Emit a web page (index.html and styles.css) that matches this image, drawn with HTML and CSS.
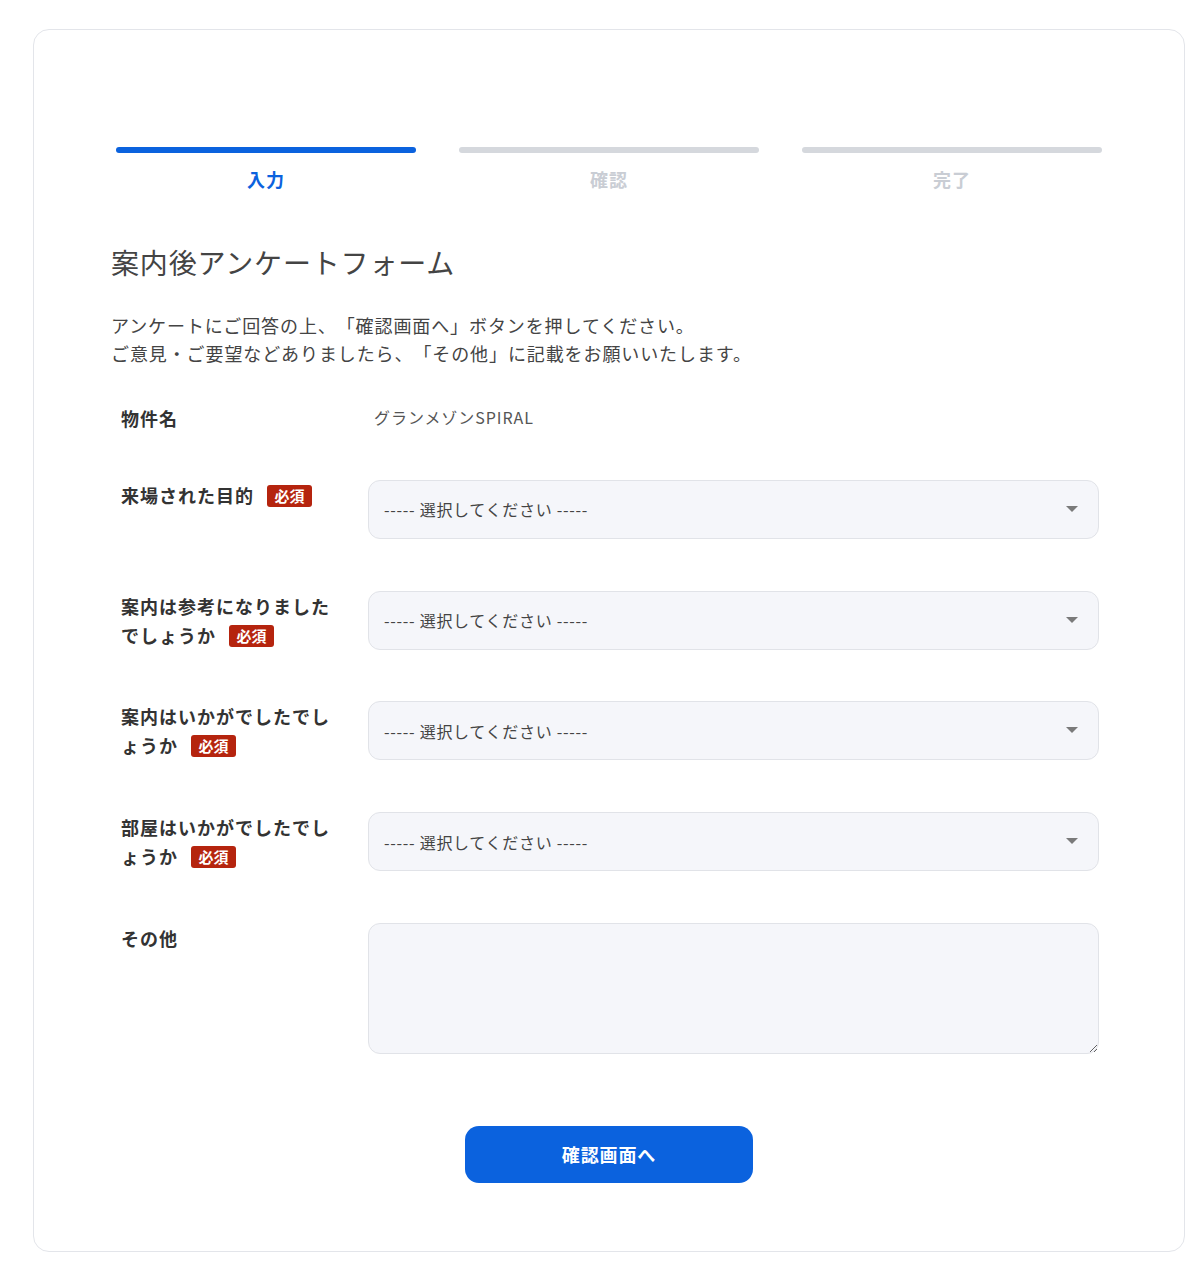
FILE: index.html
```html
<!DOCTYPE html>
<html lang="ja">
<head>
<meta charset="utf-8">
<title>案内後アンケートフォーム</title>
<link rel="stylesheet" href="styles.css">
</head>
<body>
<div class="page">
  <div class="card">
    <div class="steps">
      <div class="step active"><div class="bar"></div><div class="step-label">入力</div></div>
      <div class="step"><div class="bar"></div><div class="step-label">確認</div></div>
      <div class="step"><div class="bar"></div><div class="step-label">完了</div></div>
    </div>
    <div class="form-area">
      <h1 class="title">案内後アンケートフォーム</h1>
      <p class="desc">アンケートにご回答の上、「確認画面へ」ボタンを押してください。<br>ご意見・ご要望などありましたら、「その他」に記載をお願いいたします。</p>
      <div class="rows">
        <div class="row row-static">
          <div class="label">物件名</div>
          <div class="value">グランメゾンSPIRAL</div>
        </div>
        <div class="row">
          <div class="label">来場された目的<span class="req">必須</span></div>
          <div class="select-wrap"><select class="select"><option>----- 選択してください -----</option></select></div>
        </div>
        <div class="row">
          <div class="label">案内は参考になりましたでしょうか<span class="req">必須</span></div>
          <div class="select-wrap"><select class="select"><option>----- 選択してください -----</option></select></div>
        </div>
        <div class="row">
          <div class="label">案内はいかがでしたでしょうか<span class="req">必須</span></div>
          <div class="select-wrap"><select class="select"><option>----- 選択してください -----</option></select></div>
        </div>
        <div class="row">
          <div class="label">部屋はいかがでしたでしょうか<span class="req">必須</span></div>
          <div class="select-wrap"><select class="select"><option>----- 選択してください -----</option></select></div>
        </div>
        <div class="row">
          <div class="label">その他</div>
          <textarea class="textarea"></textarea>
        </div>
      </div>
      <div class="actions">
        <button class="btn" type="button">確認画面へ</button>
      </div>
    </div>
  </div>
</div>
</body>
</html>
```

FILE: styles.css
```css
* { box-sizing: border-box; }
html, body { margin: 0; padding: 0; background: #fff; }
body {
  font-family: "Noto Sans CJK JP", "Noto Sans", sans-serif;
  color: #333;
  text-spacing-trim: space-all;
}
.page {
  padding: 29px 16px 16px 33px;
}
.card {
  border: 1px solid #e3e5ea;
  border-radius: 16px;
  padding: 117px 82px 68px;
  background: #fff;
}
.steps {
  display: flex;
  gap: 43px;
}
.step {
  flex: 1;
  display: flex;
  flex-direction: column;
  align-items: center;
}
.bar {
  width: 100%;
  height: 6px;
  border-radius: 3px;
  background: #d5d8dd;
}
.step.active .bar { background: #0b62de; }
.step-label {
  margin-top: 12px;
  font-size: 18px;
  line-height: 28px;
  font-weight: 700;
  letter-spacing: 0.05em;
  color: #c9cdd4;
}
.step.active .step-label { color: #0b62de; }

.form-area {
  margin: 0 -5px;
}
.title {
  margin: 49px 0 0;
  font-size: 28px;
  line-height: 40px;
  font-weight: 400;
  letter-spacing: 0.03em;
  color: #444;
}
.desc {
  margin: 29px 0 0;
  font-size: 18px;
  line-height: 28px;
  letter-spacing: 0.05em;
  color: #444;
}
.rows {
  margin-top: 37px;
  display: flex;
  flex-direction: column;
  gap: 51.75px;
}
.row {
  display: grid;
  grid-template-columns: 257px 731px;
  align-items: start;
}
.row-static { margin-bottom: -5px; }
.label {
  padding: 1px 0 0 10px;
  width: 232px;
  font-size: 18px;
  line-height: 29px;
  font-weight: 700;
  letter-spacing: 1px;
  color: #333;
  line-break: anywhere;
}
.row-static .label { padding-top: 0; }
.req {
  display: inline-block;
  margin-left: 13px;
  padding: 0 7.5px;
  height: 22px;
  line-height: 22px;
  border-radius: 3px;
  background: #b5240e;
  color: #fff;
  font-size: 15px;
  font-weight: 700;
  letter-spacing: 0;
  vertical-align: 1px;
}
.value {
  padding: 0 0 0 6px;
  font-size: 16px;
  line-height: 27px;
  letter-spacing: 0.06em;
  color: #555;
}
.select-wrap {
  position: relative;
}
.select-wrap::after {
  content: "";
  position: absolute;
  right: 21px;
  top: 26px;
  border-left: 6px solid transparent;
  border-right: 6px solid transparent;
  border-top: 6px solid #7a7a7a;
  pointer-events: none;
}
.select {
  appearance: none;
  -webkit-appearance: none;
  display: block;
  width: 100%;
  height: 59px;
  padding: 0 40px 0 15px;
  border: 1px solid #e1e3e8;
  border-radius: 12px;
  background: #f5f6fa;
  font-family: inherit;
  font-size: 16px;
  letter-spacing: 0.045em;
  color: #444;
  outline: none;
}
.textarea {
  display: block;
  width: 100%;
  height: 131px;
  padding: 12px 15px;
  border: 1px solid #e1e3e8;
  border-radius: 12px;
  background: #f5f6fa;
  font-family: inherit;
  font-size: 16px;
  color: #444;
  outline: none;
}
.actions {
  margin-top: 72px;
  display: flex;
  justify-content: center;
}
.btn {
  width: 288px;
  height: 57px;
  border: 0;
  border-radius: 14px;
  background: #0b62de;
  color: #fff;
  font-family: inherit;
  font-size: 18px;
  font-weight: 700;
  letter-spacing: 0.05em;
  cursor: pointer;
}
```
